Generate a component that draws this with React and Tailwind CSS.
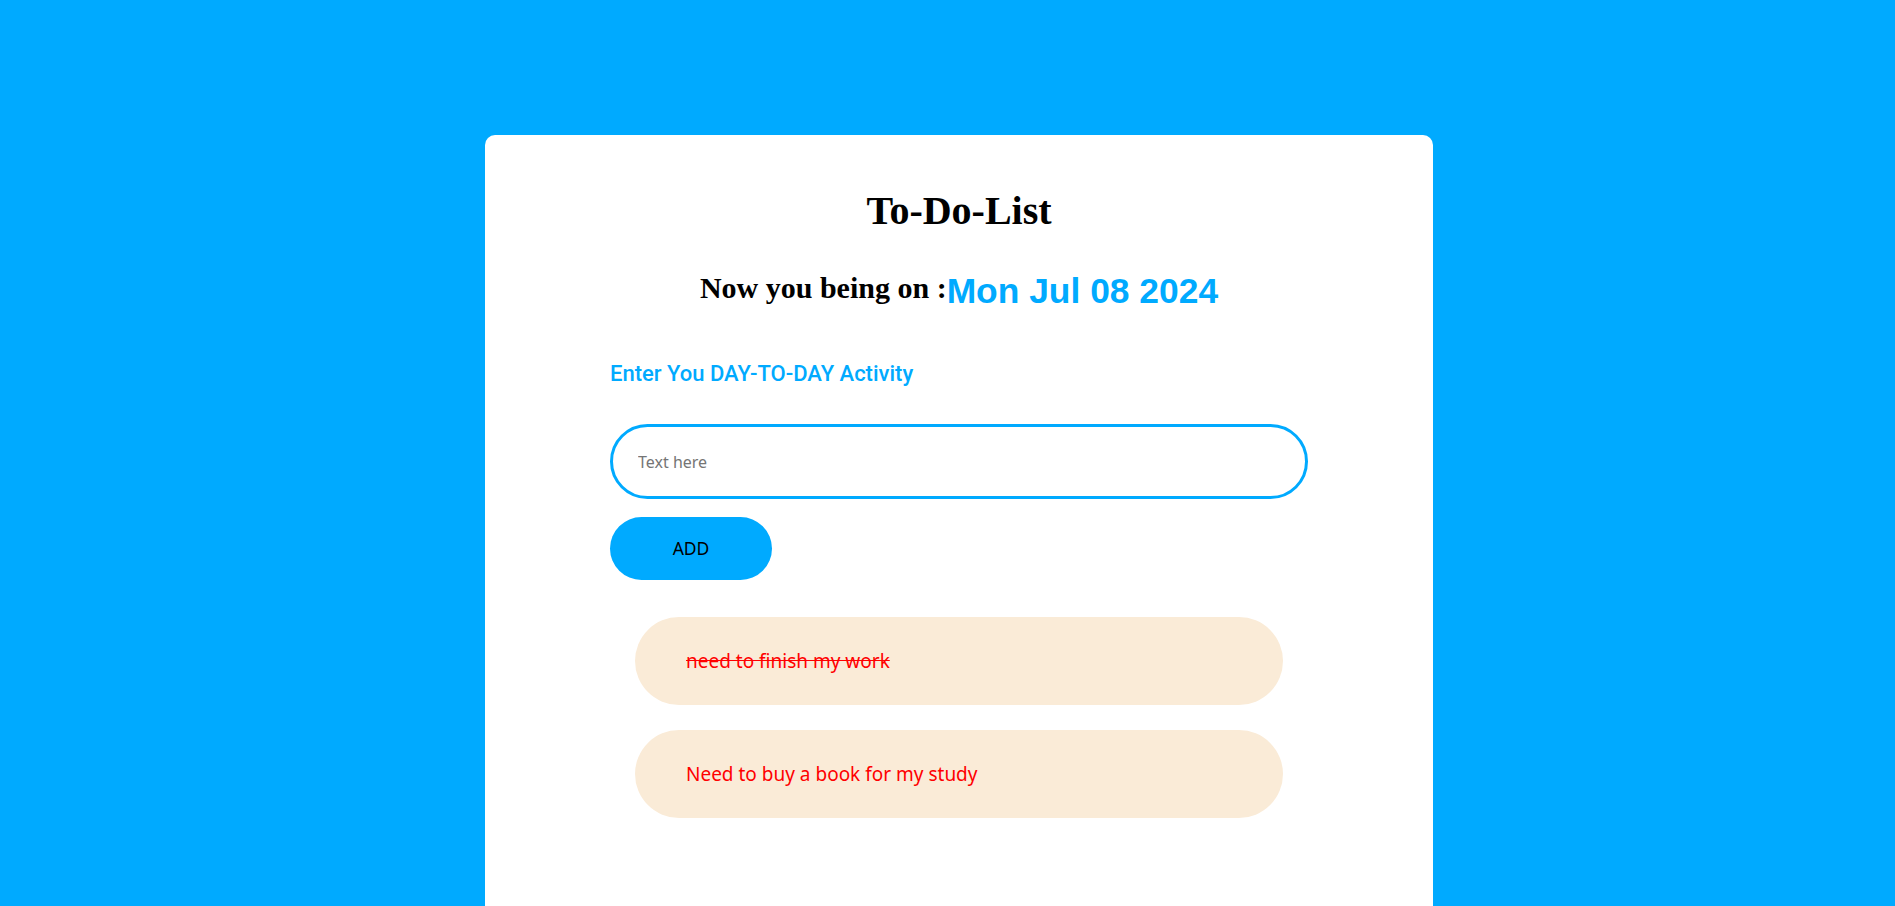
import { useState } from "react";

const INITIAL = [
  { id: 1, text: "need to finish my work", done: true },
  { id: 2, text: "Need to buy a book for my study", done: false },
];

export default function App() {
  const [todos, setTodos] = useState(INITIAL);
  const [value, setValue] = useState("");

  const addTodo = () => {
    if (!value.trim()) return;
    setTodos(t => [...t, { id: Date.now(), text: value, done: false }]);
    setValue("");
  };

  const toggle = (id) =>
    setTodos(t => t.map(x => (x.id === id ? { ...x, done: !x.done } : x)));

  return (
    <div className="min-h-screen bg-[#00aaff] pt-[135px] font-['Noto_Sans',sans-serif] overflow-hidden">
      <div className="ml-[485px] w-[948px] min-h-[800px] rounded-[10px] bg-white pt-[53px] px-[125px]">

        {/* Heading */}
        <h1 className="text-center text-[40px] leading-[45px] font-bold text-black font-['Liberation_Serif',serif]">
          To-Do-List
        </h1>

        <div className="mt-[38px] flex justify-center items-start">
          <span className="text-[30px] leading-[34px] font-bold text-black font-['Liberation_Serif',serif]">
            Now you being on :
          </span>
          <span className="text-[35.4px] leading-[40px] font-bold text-[#00aaff] font-['Liberation_Sans',Arial,sans-serif]">
            Mon Jul 08 2024
          </span>
        </div>

        {/* Input */}
        <p className="mt-[50px] text-[22px] leading-[26px] font-medium text-[#00aaff] font-['Roboto',sans-serif]">
          Enter You DAY-TO-DAY Activity
        </p>

        <input
          value={value}
          onChange={e => setValue(e.target.value)}
          placeholder="Text here"
          className="mt-[37px] block w-full h-[75px] rounded-full border-[3px] border-[#00aaff] pl-[25px] text-[16px] text-black placeholder:text-[#757575] outline-none"
        />

        <button
          type="button"
          onClick={addTodo}
          className="mt-[18px] block w-[162px] h-[63px] rounded-full bg-[#00aaff] text-[17.5px] text-black"
        >
          ADD
        </button>

        {/* List */}
        <ul className="mt-[37px] px-[25px] flex flex-col gap-[25px]">
          {todos.map(t => (
            <li
              key={t.id}
              onClick={() => toggle(t.id)}
              className="h-[88px] rounded-full bg-[#faebd7] flex items-center pl-[51px] text-[19px] text-[#ff0000] cursor-pointer"
            >
              <span className={t.done ? "line-through" : ""}>{t.text}</span>
            </li>
          ))}
        </ul>
      </div>
    </div>
  );
}
